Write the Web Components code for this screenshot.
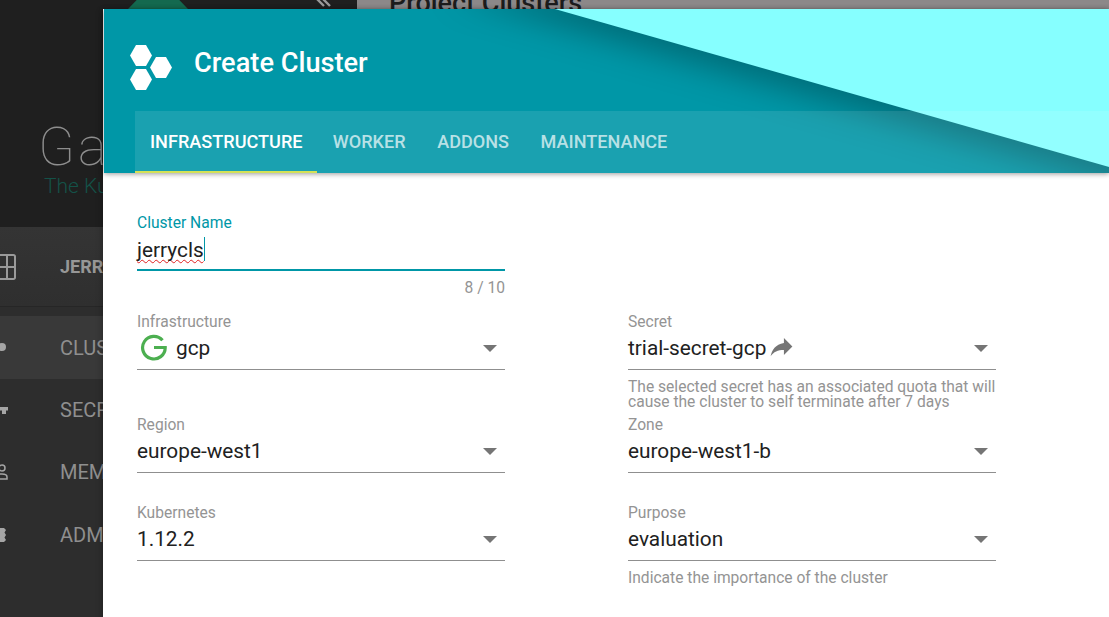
<!DOCTYPE html>
<html>
<head>
<meta charset="utf-8">
<style>
html, body { margin: 0; height: 100%; overflow: hidden; }
body { font-family: Roboto, "Liberation Sans", sans-serif; background: #8c8889; }
</style>
</head>
<body>
<app-shell>
  <side-nav slot="nav"></side-nav>
  <span slot="page">Project Clusters</span>
  <cluster-dialog slot="dialog">
    <form-field label="Cluster Name" value="jerrycls" type="name" hint="8 / 10"></form-field>
    <span></span>
    <form-field label="Infrastructure" value="gcp" type="gcp"></form-field>
    <form-field label="Secret" value="trial-secret-gcp" type="secret" note="The selected secret has an associated quota that will cause the cluster to self terminate after 7 days"></form-field>
    <form-field label="Region" value="europe-west1"></form-field>
    <form-field label="Zone" value="europe-west1-b"></form-field>
    <form-field label="Kubernetes" value="1.12.2"></form-field>
    <form-field label="Purpose" value="evaluation" note="Indicate the importance of the cluster"></form-field>
  </cluster-dialog>
</app-shell>

<script>
'use strict'

class AppShell extends HTMLElement {
    constructor() {
        super()
        this.attachShadow({mode: 'open'})
        this.shadowRoot.innerHTML = `
<style>
:host { display: flex; width: 1109px; height: 617px; overflow: hidden; position: relative; }
.nav { width: 357px; flex: none; }
.page { flex: 1; background: #8c8889; padding-left: 32px; font-size: 27px; line-height: 32px; font-weight: 500; color: #1c1c1c; }
.page div { margin-top: -13px; }
.dialog { position: absolute; left: 103px; top: 9px; right: 0; bottom: 0; }
</style>
<div class="nav"><slot name="nav"></slot></div>
<div class="page"><div><slot name="page"></slot></div></div>
<div class="dialog"><slot name="dialog"></slot></div>`
    }
}

class SideNav extends HTMLElement {
    constructor() {
        super()
        this.attachShadow({mode: 'open'})
        this.shadowRoot.innerHTML = `
<style>
:host { display: flex; flex-direction: column; height: 617px; background: #2d2d2d; color: #8f8f8f; overflow: hidden; position: relative; }
.brand { height: 227px; flex: none; background: #1f1f1f; box-sizing: border-box; padding: 117px 0 0 38px; position: relative; }
.roof { position: absolute; left: 128px; top: -22px; width: 60px; height: 31px; }
.chev { position: absolute; left: 314px; top: -2px; }
.name { font-size: 54px; font-weight: 100; line-height: 59px; letter-spacing: 3px; color: #8e8e8e; }
.tag { font-size: 21px; font-weight: 300; line-height: 20px; color: #145248; margin-left: 6px; white-space: nowrap; }
.team { height: 80px; flex: none; display: flex; align-items: center; font-size: 18px; font-weight: 700; background: linear-gradient(#343434, #2f2f2f); box-sizing: border-box; padding-left: 60px; position: relative; margin-bottom: 9px; border-bottom: 1px solid #262626; color: #979797; }
.row { height: 62.5px; display: flex; align-items: center; padding-left: 60px; font-size: 20px; position: relative; }
.row.on { background: #393939; padding-top: 1px; box-sizing: border-box; }
svg.i { position: absolute; left: -16px; top: 50%; margin-top: -12px; }
.team svg.i { left: -10px; margin-top: -13px; }
</style>
<div class="brand">
  <svg class="roof" viewBox="0 0 60 31"><path d="M30 0 60 31H0z" fill="#14694f"/></svg>
  <svg class="chev" width="20" height="10" viewBox="0 0 20 10"><path d="M2 0l8 8M8 0l8 8" stroke="#9a9a9a" stroke-width="2.4" fill="none"/></svg>
  <div class="name">Ga</div>
  <div class="tag">The Ku</div>
</div>
<div class="team">
  <svg class="i" width="26" height="26" viewBox="0 0 26 26"><path d="M1 2.500a1.500 1.500 0 0 1 1.500-1.500h21a1.500 1.500 0 0 1 1.500 1.500v21a1.500 1.500 0 0 1-1.500 1.500h-21a1.500 1.500 0 0 1-1.500-1.500zM17 1v24M1 13h24" fill="none" stroke="#9a9a9a" stroke-width="2"/></svg>
  JERRY
</div>
<div class="row on">
  <svg class="i" width="24" height="24" viewBox="0 0 24 24"><circle cx="18" cy="12" r="4" fill="#a5a5a5"/></svg>
  CLUSTERS
</div>
<div class="row">
  <svg class="i" width="24" height="24" viewBox="0 0 24 24"><path d="M10 9h14v3.500h-2V16h-4v-3.500h-8z" fill="#a5a5a5"/></svg>
  SECRETS
</div>
<div class="row">
  <svg class="i" width="24" height="24" viewBox="0 0 24 24"><circle cx="18" cy="8" r="3" fill="none" stroke="#a5a5a5" stroke-width="1.500"/><path d="M10 19v-2c0-2 5-3 8-3 2 0 5 .8 5 3v2z" fill="none" stroke="#a5a5a5" stroke-width="1.500"/></svg>
  MEMBERS
</div>
<div class="row">
  <svg class="i" width="24" height="24" viewBox="0 0 24 24"><path d="M12 5h8l2 2-1.500 2.500L22 12l-1.500 2.500L22 17l-2 2h-8z" fill="#a5a5a5"/></svg>
  ADMIN
</div>`
    }
}

class ClusterDialog extends HTMLElement {
    constructor() {
        super()
        this.attachShadow({mode: 'open'})
        this.shadowRoot.innerHTML = `
<style>
:host { display: flex; flex-direction: column; height: 100%; background: #fff; box-shadow: 0 3px 7px rgba(0,0,0,.35); }
header { height: 164px; flex: none; position: relative; display: flex; flex-direction: column; background: #0097a7; box-shadow: 0 1px 5px rgba(0,0,0,.4); z-index: 1; overflow: hidden; margin-left: 1px; }
.corner { position: absolute; left: 0; top: 0; width: 100%; height: 164px; }
.corner path { filter: drop-shadow(-8px 12px 16px rgba(0,0,0,.28)); }
.title { height: 102px; flex: none; box-sizing: border-box; padding: 6px 0 0 26px; display: flex; align-items: center; gap: 22px; position: relative; font-size: 27.200px; font-weight: 500; color: #fff; }
.title svg { margin-top: 8px; }
.tabs { height: 62px; margin-left: 31px; display: flex; background: rgba(255,255,255,.1); position: relative; font-size: 18.100px; font-weight: 500; color: rgba(255,255,255,.7); }
.tab { display: flex; align-items: center; padding: 0 15.750px 2px; box-sizing: border-box; }
.tab.on { color: #fff; border-bottom: 2px solid #d4e157; padding: 0 14.250px 0 15px; }
.tab.on + .tab { padding-left: 16px; }
.form { flex: 1; display: grid; grid-template-columns: 368px 368px; column-gap: 123px; grid-auto-rows: min-content; padding: 40px 0 0 34px; }
</style>
<header>
  <svg class="corner" viewBox="0 0 1005 164" preserveAspectRatio="none">
    <path d="M351 -28.500 1105 186.500V-28.500Z" fill="#86ffff"/>
  </svg>
  <div class="title">
    <svg width="42" height="45" viewBox="0 0 42 45"><g fill="#fff"><path d="M6 0h10l6 10.500-6 10.500H6L0 10.500z"/><path d="M6 24h10l6 10.500-6 10.500H6L0 34.500z"/><path d="M26 12h10l6 10.500-6 10.500H26l-6-10.500z"/></g></svg>
    <span>Create Cluster</span>
  </div>
  <div class="tabs">
    <div class="tab on">INFRASTRUCTURE</div>
    <div class="tab">WORKER</div>
    <div class="tab">ADDONS</div>
    <div class="tab">MAINTENANCE</div>
  </div>
</header>
<div class="form"><slot></slot></div>`
    }
}

class FormField extends HTMLElement {
    constructor() {
        super()
        this.attachShadow({mode: 'open'})
    }
    connectedCallback() {
        const type = this.getAttribute('type')
        const isName = type == 'name'
        const hint = this.getAttribute('hint')
        const note = this.getAttribute('note')
        let before = ''
        let after = ''
        if (type == 'gcp') {
            before = `<svg class="g" width="27" height="27" viewBox="0 0 27 27"><path d="M22.500 6.300A11.300 11.300 0 1 0 25.200 13.500H14" fill="none" stroke="#4caf50" stroke-width="3.200"/></svg>`
        }
        if (type == 'secret') {
            after = `<svg class="share" width="29" height="29" viewBox="0 0 24 24"><path d="M14 9V5l7 7-7 7v-4.100c-5 0-8.500 1.600-11 5.100 1-5 4-10 11-11z" fill="#757575"/></svg>`
        }
        let bottom = 30
        if (isName) bottom = 15
        if (note) bottom = 5
        this.shadowRoot.innerHTML = `
<style>
:host { display: block; padding-bottom: ${bottom}px; }
.label { font-size: 15.600px; line-height: 18px; padding-top: 1px; margin-bottom: -1px; color: ${isName ? '#0097a7' : '#949494'}; }
.box { height: 40px; display: flex; align-items: flex-start; font-size: 20.800px; line-height: ${isName ? 38 : 36}px; color: #212121; box-sizing: border-box; border-bottom: ${isName ? '2px solid #0097a7' : '1px solid #8f8f8f'}; position: relative; }
.wavy { text-decoration: underline wavy #e02020 1px; text-underline-offset: 2px; text-decoration-skip-ink: none; }
.caret { width: 1px; height: 24px; background: #0097a7; margin: 6px 0 0 0; }
.g { margin: 4px 9px 0 3px; }
.share { margin: 2px 0 0 1px; }
.arrow { position: absolute; right: 8px; top: 15px; width: 0; height: 0; border: 7px solid transparent; border-top-color: #757575; border-bottom: 0; }
.hint { font-size: 15.600px; line-height: 17px; color: #949494; text-align: right; margin-top: 9px; }
.note { font-size: 15.600px; line-height: 15px; color: #949494; margin-top: 10px; }
</style>
<div class="label">${this.getAttribute('label')}</div>
<div class="box">
  ${before}<span class="${isName ? 'wavy' : ''}">${this.getAttribute('value')}</span>${isName ? '<span class="caret"></span>' : ''}${after}
  ${isName ? '' : '<span class="arrow"></span>'}
</div>
${hint ? `<div class="hint">${hint}</div>` : ''}
${note ? `<div class="note">${note}</div>` : ''}`
    }
}

customElements.define('app-shell', AppShell)
customElements.define('side-nav', SideNav)
customElements.define('cluster-dialog', ClusterDialog)
customElements.define('form-field', FormField)
</script>
</body>
</html>
